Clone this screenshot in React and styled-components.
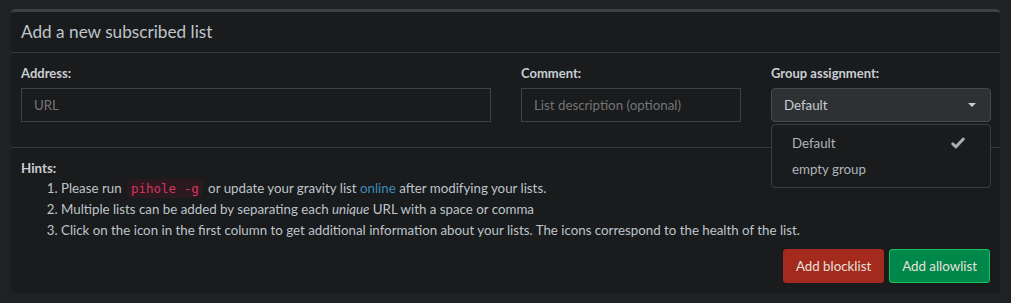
import styled, { createGlobalStyle } from "styled-components";

const GlobalStyle = createGlobalStyle`
    body {
        margin: 0;
        background-color: #1e2224;
        font-family: Lato, "Noto Sans", sans-serif;
        font-size: 13.3px;
        color: #bec5cb;
    }
`;

const Page = styled.div`
    padding: 9px 11px 10px 11px;
`;

const Box = styled.div`
    background-color: #191b1d;
    border-top: 3px solid #3b4043;
    border-radius: 4px;
`;

const BoxHeader = styled.div`
    padding: 10px;
    border-bottom: 1px solid #353a3d;
    font-size: 17.2px;
    line-height: 20px;
    color: #bec5cb;
`;

const BoxBody = styled.div`
    padding: 10px;
`;

const Row = styled.div`
    display: grid;
    grid-template-columns: 470px 220px 220px;
    column-gap: 30px;
`;

const FormGroup = styled.div`
    position: relative;
    margin-bottom: 15px;
`;

const Label = styled.label`
    display: block;
    font-weight: 700;
    font-size: 13px;
    line-height: 20px;
    margin-bottom: 5px;
    color: #c9ced2;
`;

const Input = styled.input`
    box-sizing: border-box;
    width: 100%;
    height: 34px;
    padding: 6px 12px;
    background-color: #191b1d;
    border: 1px solid #3e4245;
    color: #bec5cb;
    font-family: inherit;
    font-size: 13.3px;
    outline: none;

    ::placeholder {
        color: #666c70;
    }
`;

const Select = styled.div`
    box-sizing: border-box;
    display: flex;
    align-items: center;
    justify-content: space-between;
    height: 34px;
    padding: 0 12px;
    background-color: #2d3134;
    border: 1px solid #464a4d;
    border-radius: 4px;
    color: #c9ced2;
`;

const Caret = styled.span`
    width: 0;
    height: 0;
    border-left: 4px solid transparent;
    border-right: 4px solid transparent;
    border-top: 4px solid #c9ced2;
    margin-right: 2px;
`;

const Menu = styled.div`
    position: absolute;
    top: 61px;
    left: 0;
    right: 0;
    z-index: 2;
    box-sizing: border-box;
    padding: 5px 0;
    background-color: #191b1d;
    border: 1px solid #3a3e41;
    border-radius: 4px;
`;

const MenuItem = styled.div`
    display: flex;
    align-items: center;
    justify-content: space-between;
    height: 26px;
    padding: 0 25px 0 20px;
    color: #aeb5bb;
`;

const BoxFooter = styled.div`
    padding: 11px 10px 10px 10px;
    border-top: 1px solid #353a3d;
`;

const HintsTitle = styled.div`
    font-weight: 700;
    line-height: 19px;
    color: #c9ced2;
`;

const HintList = styled.ol`
    margin: 0;
    padding-left: 40px;
    line-height: 21px;
`;

const Code = styled.code`
    font-family: "DejaVu Sans Mono", monospace;
    font-size: 12.5px;
    color: #d9345e;
    background-color: #2a1a1f;
    padding: 2px 4px;
    border-radius: 4px;
    margin: 0 2px;
`;

const Link = styled.a`
    color: #3c8dbc;
    text-decoration: none;
`;

const Actions = styled.div`
    display: flex;
    justify-content: flex-end;
    gap: 5px;
    margin-top: 8px;
`;

const Button = styled.button`
    height: 34px;
    padding: 0 12px;
    font-family: inherit;
    font-size: 13.3px;
    color: #e6e1dc;
    border-radius: 3px;
    border: 1px solid ${props => props.$border};
    background-color: ${props => props.$bg};
`;

const Check = () => (
    <svg width="14" height="12" viewBox="0 0 14 12">
        <path d="M1.8 6.8 L5 9.8 L12.3 2" fill="none" stroke="#a8afb4" strokeWidth="3" strokeLinecap="round" strokeLinejoin="round" />
    </svg>
);

const App = () => {
    return (
        <Page>
            <GlobalStyle />
            <Box>
                <BoxHeader>Add a new subscribed list</BoxHeader>
                <BoxBody>
                    <Row>
                        <FormGroup>
                            <Label>Address:</Label>
                            <Input placeholder="URL" />
                        </FormGroup>
                        <FormGroup>
                            <Label>Comment:</Label>
                            <Input placeholder="List description (optional)" />
                        </FormGroup>
                        <FormGroup>
                            <Label>Group assignment:</Label>
                            <Select>
                                <span>Default</span>
                                <Caret />
                            </Select>
                            <Menu>
                                <MenuItem>
                                    <span>Default</span>
                                    <Check />
                                </MenuItem>
                                <MenuItem>empty group</MenuItem>
                            </Menu>
                        </FormGroup>
                    </Row>
                </BoxBody>
                <BoxFooter>
                    <HintsTitle>Hints:</HintsTitle>
                    <HintList>
                        <li>Please run <Code>pihole -g</Code> or update your gravity list <Link href="#">online</Link> after modifying your lists.</li>
                        <li>Multiple lists can be added by separating each <em>unique</em> URL with a space or comma</li>
                        <li>Click on the icon in the first column to get additional information about your lists. The icons correspond to the health of the list.</li>
                    </HintList>
                    <Actions>
                        <Button $bg="#a52a1e" $border="#a52a1e">Add blocklist</Button>
                        <Button $bg="#00874a" $border="#17c35f">Add allowlist</Button>
                    </Actions>
                </BoxFooter>
            </Box>
        </Page>
    );
};

export default App;
